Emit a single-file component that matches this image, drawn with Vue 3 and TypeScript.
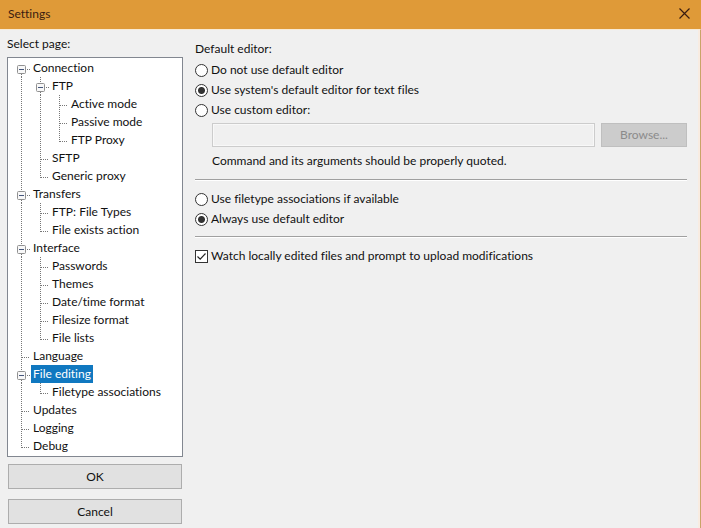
<script setup lang="ts">
import { computed, ref } from 'vue'

interface PageNode {
  label: string
  children?: PageNode[]
}

interface Row {
  label: string
  depth: number
  guides: boolean[]
  first: boolean
  last: boolean
  branch: boolean
  open: boolean
}

const pages: PageNode[] = [
  {
    label: 'Connection',
    children: [
      {
        label: 'FTP',
        children: [{ label: 'Active mode' }, { label: 'Passive mode' }, { label: 'FTP Proxy' }],
      },
      { label: 'SFTP' },
      { label: 'Generic proxy' },
    ],
  },
  { label: 'Transfers', children: [{ label: 'FTP: File Types' }, { label: 'File exists action' }] },
  {
    label: 'Interface',
    children: [
      { label: 'Passwords' },
      { label: 'Themes' },
      { label: 'Date/time format' },
      { label: 'Filesize format' },
      { label: 'File lists' },
    ],
  },
  { label: 'Language' },
  { label: 'File editing', children: [{ label: 'Filetype associations' }] },
  { label: 'Updates' },
  { label: 'Logging' },
  { label: 'Debug' },
]

const collapsed = ref<string[]>([])
const selected = ref('File editing')
const editor = ref('system')
const association = ref('always')
const customCommand = ref('')
const watchFiles = ref(true)

function flatten(nodes: PageNode[], guides: boolean[]): Row[] {
  return nodes.flatMap((node, i) => {
    const last = i === nodes.length - 1
    const open = !collapsed.value.includes(node.label)
    const row: Row = {
      label: node.label,
      depth: guides.length,
      guides,
      first: i === 0 && guides.length === 0,
      last,
      branch: !!node.children,
      open,
    }
    return [row, ...(node.children && open ? flatten(node.children, [...guides, !last]) : [])]
  })
}

const rows = computed(() => flatten(pages, []))

function toggle(label: string) {
  collapsed.value = collapsed.value.includes(label)
    ? collapsed.value.filter((l) => l !== label)
    : [...collapsed.value, label]
}
</script>

<template>
  <div class="window">
    <header class="titlebar">
      <h1>Settings</h1>
      <button type="button" class="close" aria-label="Close">
        <svg width="11" height="11" viewBox="0 0 11 11" aria-hidden="true">
          <path d="M.5.5l10 10M10.500.5l-10 10" fill="none" stroke="#3a1c10" stroke-width="1.2" />
        </svg>
      </button>
    </header>

    <div class="body">
      <nav class="sidebar" aria-labelledby="page-label">
        <div id="page-label" class="caption">Select page:</div>
        <div class="tree" role="tree" aria-labelledby="page-label">
          <div
            v-for="row in rows"
            :key="row.label"
            class="row"
            role="treeitem"
            :aria-level="row.depth + 1"
            :aria-selected="row.label === selected"
            :aria-expanded="row.branch ? row.open : undefined"
          >
            <svg v-for="(line, i) in row.guides" :key="i" class="cell" viewBox="0 0 19 18" aria-hidden="true">
              <path v-if="line" d="M9.500 0V18" class="dots" />
            </svg>
            <button v-if="row.branch" type="button" class="expander" :aria-label="'Toggle ' + row.label" @click="toggle(row.label)">
              <svg class="cell" viewBox="0 0 19 18" aria-hidden="true">
                <path v-if="!row.first" d="M9.500 0V6" class="dots" />
                <path v-if="!row.last" d="M9.500 15V18" class="dots" />
                <path d="M15 10.500H18" class="dots" />
                <rect x="5.500" y="6.500" width="8" height="8" rx="1" fill="#f8f8f8" stroke="#919191" />
                <path d="M7 10.500H12" stroke="#45567c" />
                <path v-if="!row.open" d="M9.500 8V13" stroke="#45567c" />
              </svg>
            </button>
            <svg v-else class="cell" viewBox="0 0 19 18" aria-hidden="true">
              <path :d="row.last ? 'M9.500 0V11' : 'M9.500 0V18'" class="dots" />
              <path d="M10 10.500H18" class="dots" />
            </svg>
            <button type="button" class="page" :class="{ active: row.label === selected }" @click="selected = row.label">
              {{ row.label }}
            </button>
          </div>
        </div>
        <div class="actions">
          <button type="button" class="push">OK</button>
          <button type="button" class="push">Cancel</button>
        </div>
      </nav>

      <main class="content">
        <fieldset class="group">
          <legend>Default editor:</legend>
          <label class="option"><input v-model="editor" type="radio" name="editor" value="none" />Do not use default editor</label>
          <label class="option"><input v-model="editor" type="radio" name="editor" value="system" />Use system's default editor for text files</label>
          <label class="option"><input v-model="editor" type="radio" name="editor" value="custom" />Use custom editor:</label>
          <div class="custom">
            <div class="field">
              <input v-model="customCommand" type="text" aria-label="Custom editor command" aria-describedby="hint" :disabled="editor !== 'custom'" />
              <button type="button" class="push" :disabled="editor !== 'custom'">Browse...</button>
            </div>
            <p id="hint">Command and its arguments should be properly quoted.</p>
          </div>
        </fieldset>
        <hr />
        <fieldset class="group" aria-label="Filetype associations">
          <label class="option"><input v-model="association" type="radio" name="association" value="filetype" />Use filetype associations if available</label>
          <label class="option"><input v-model="association" type="radio" name="association" value="always" />Always use default editor</label>
        </fieldset>
        <hr />
        <label class="option">
          <span class="check">
            <input v-model="watchFiles" type="checkbox" />
            <svg v-if="watchFiles" width="13" height="13" viewBox="0 0 13 13" aria-hidden="true">
              <path d="M2.500 6.500l2.700 2.700 5.300-5.700" fill="none" stroke="#222" stroke-width="1.200" />
            </svg>
          </span>
          Watch locally edited files and prompt to upload modifications
        </label>
      </main>
    </div>
  </div>
</template>

<style>
body {
  margin: 0;
  background: #f0f0f0;
}
</style>

<style scoped>
.window {
  box-sizing: border-box;
  display: flex;
  flex-direction: column;
  min-height: 100vh;
  background: #f0f0f0;
  color: #111;
  font: 12px/18px Lato, "Open Sans", sans-serif;
  font-variant-ligatures: none;
}

button,
input {
  margin: 0;
  font: inherit;
  font-variant-ligatures: none;
  color: inherit;
}

.titlebar {
  display: flex;
  align-items: center;
  justify-content: space-between;
  height: 29px;
  padding: 0 11px 2px 8px;
  box-sizing: border-box;
  background: #df9a38;
  color: #3a1c10;
}

.titlebar h1 {
  margin: 0;
  font-size: 12px;
  font-weight: 400;
}

.close {
  display: flex;
  padding: 0;
  border: 0;
  background: none;
}

.body {
  display: flex;
  flex: 1;
  gap: 12px;
  padding: 5px 11px 5px 7px;
  border-top: 1px solid #f8ead4;
  border-right: 1px solid #c9a468;
  box-shadow: inset -2px 0 #f8ece2;
}

.sidebar {
  flex: 0 0 176px;
}

.caption {
  margin-bottom: 4px;
}

.tree {
  padding: 1px 4px;
  border: 1px solid #828790;
  background: #fff;
}

.row {
  display: flex;
  height: 18px;
}

.cell {
  display: block;
  width: 19px;
  height: 18px;
}

.dots {
  fill: none;
  stroke: #777;
  stroke-dasharray: 1 1;
}

.expander {
  padding: 0;
  border: 0;
  background: none;
}

.page {
  padding: 0 2px;
  border: 0;
  background: none;
  white-space: nowrap;
}

.page.active {
  background: #1078c0;
  color: #fff;
}

.actions {
  display: flex;
  flex-direction: column;
  gap: 10px;
  padding: 7px 1px 0;
}

.push {
  height: 25px;
  padding: 0;
  border: 1px solid #adadad;
  background: #e1e1e1;
  line-height: 22px;
}

.push:disabled {
  border-color: #bfbfbf;
  background: #ccc;
  color: #8b8b8b;
}

.content {
  flex: 1;
  min-width: 0;
  padding: 5px 2px 0 0;
}

.group {
  min-width: 0;
  margin: 0;
  padding: 0;
  border: 0;
}

legend {
  margin-bottom: 2px;
  padding: 0;
}

.option {
  display: flex;
  align-items: center;
  gap: 3px;
  height: 20px;
}

input[type="radio"],
input[type="checkbox"] {
  flex: none;
  width: 13px;
  height: 13px;
  border: 1px solid #333;
  background: #fff;
  appearance: none;
}

input[type="radio"] {
  border-radius: 50%;
}

input[type="radio"]:checked {
  background: radial-gradient(circle, #333 3px, #fff 4px);
}

.check {
  display: grid;
}

.check > * {
  grid-area: 1 / 1;
}

.check svg {
  pointer-events: none;
}

.custom {
  padding: 3px 0 0 17px;
}

.field {
  display: flex;
  gap: 6px;
}

.field input {
  flex: 1;
  min-width: 0;
  height: 24px;
  box-sizing: border-box;
  border: 1px solid #ccc;
  background: #fff;
}

.field input:disabled {
  background: #f0f0f0;
  box-shadow: inset 0 0 0 1px #f8f8f8;
}

.field .push {
  flex: 0 0 86px;
  height: 24px;
}

#hint {
  margin: 5px 0 2px;
}

hr {
  height: 1px;
  margin: 7px 0 9px;
  border: 0;
  background: #a0a0a0;
  box-shadow: 0 1px #fff;
}
</style>
